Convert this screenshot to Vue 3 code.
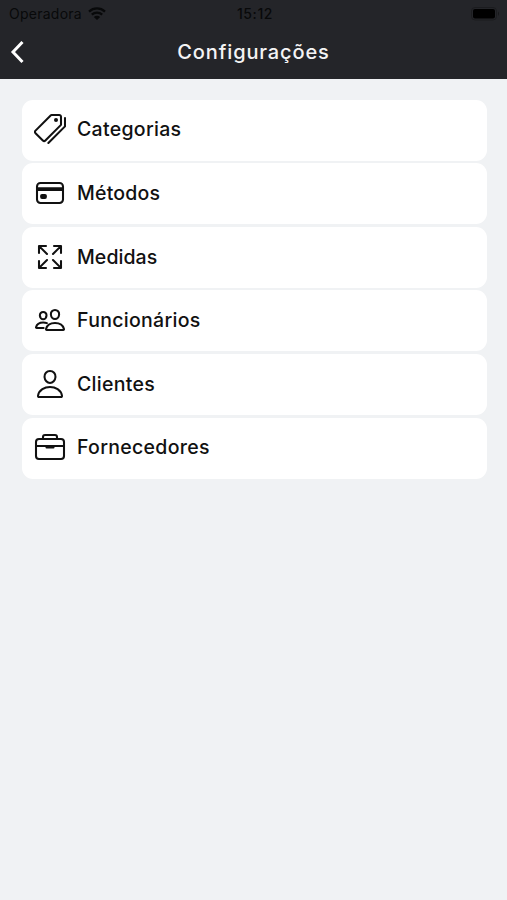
<script setup>
const items = [
  { id: 'categorias', label: 'Categorias' },
  { id: 'metodos', label: 'Métodos' },
  { id: 'medidas', label: 'Medidas' },
  { id: 'funcionarios', label: 'Funcionários' },
  { id: 'clientes', label: 'Clientes' },
  { id: 'fornecedores', label: 'Fornecedores' },
]
</script>

<template>
  <div class="screen">
    <header class="header">
      <div class="status">
        <div class="carrier">
          <span class="operator">Operadora</span>
          <svg class="wifi" viewBox="0 0 18 13">
            <path d="M1 4.6C5.6.4 12.4.4 17 4.6M3.8 7.6c3-2.7 7.4-2.7 10.4 0" fill="none" stroke="currentColor" stroke-width="2.3" />
            <path d="M9 13 5.8 9.9c1.8-1.5 4.6-1.5 6.4 0z" fill="currentColor" />
          </svg>
        </div>
        <span class="clock">15:12</span>
        <div class="power">
          <svg class="battery" viewBox="0 0 30 14">
            <rect x=".5" y=".5" width="25" height="12.5" rx="3.5" fill="none" stroke="#1b1c1f" />
            <rect x="2" y="2" width="22" height="9.5" rx="2" fill="#000" />
            <path d="M27 4.5q2 2.2 0 4.4z" fill="#17181a" />
          </svg>
        </div>
      </div>
      <div class="nav">
        <svg class="back" viewBox="0 0 14 24">
          <path d="M12.500 2 3 12l9.500 10" fill="none" stroke="#fff" stroke-width="3" />
        </svg>
        <h1 class="title">Configurações</h1>
      </div>
    </header>
    <main class="list">
      <div v-for="item in items" :key="item.id" class="row">
        <svg class="icon" viewBox="0 0 512 512">
          <g v-if="item.id === 'categorias'">
            <path d="M403.290 32H280.360a14.460 14.460 0 0 0-10.200 4.200L24.400 281.900a28.850 28.850 0 0 0 0 40.700l117 117a28.860 28.860 0 0 0 40.710 0L427.800 194a14.460 14.460 0 0 0 4.200-10.200v-123A28.660 28.660 0 0 0 403.290 32z" />
            <circle class="solid" cx="352" cy="112" r="32" />
            <path d="M230 480l262-262a13.810 13.810 0 0 0 4-10V80" />
          </g>
          <g v-else-if="item.id === 'metodos'">
            <rect x="48" y="96" width="416" height="320" rx="56" />
            <path class="thick" d="M48 192h416M128 300h48v20h-48z" />
          </g>
          <g v-else-if="item.id === 'medidas'">
            <path d="M432 320v112H320M421.800 421.800L304 304M80 192V80h112M90.200 90.200L208 208M320 80h112v112M421.800 90.200L304 208M192 432H80V320M90.200 421.800L208 304" />
          </g>
          <g v-else-if="item.id === 'funcionarios'">
            <path d="M402 168c-2.930 40.670-33.100 72-66 72s-63.120-31.320-66-72c-3-42.310 26.370-72 66-72s69 30.460 66 72z" />
            <path d="M336 304c-65.170 0-127.840 32.370-143.540 95.410-2.080 8.340 3.150 16.590 11.720 16.590h263.650c8.570 0 13.770-8.250 11.720-16.590C463.850 335.360 401.180 304 336 304z" />
            <path d="M200 185.940c-2.340 32.480-26.720 58.060-53 58.060s-50.700-25.570-53-58.060C91.610 152.150 115.340 128 147 128s55.390 24.770 53 57.940zM206 306c-18.050-8.270-37.930-11.450-59-11.450-52 0-102.100 25.850-114.650 76.200-1.650 6.660 2.530 13.250 9.370 13.250H154" />
          </g>
          <g v-else-if="item.id === 'clientes'">
            <path d="M344 144c-3.920 52.870-44 96-88 96s-84.150-43.120-88-96c-4-55 35-96 88-96s92 42 88 96z" />
            <path d="M256 304c-87 0-175.300 48-191.640 138.600C62.390 453.520 68.570 464 80 464h352c11.440 0 17.620-10.480 15.650-21.400C431.300 352 343 304 256 304z" />
          </g>
          <g v-else>
            <rect x="32" y="128" width="448" height="320" rx="48" />
            <path d="M144 128V96a32 32 0 0 1 32-32h160a32 32 0 0 1 32 32v32M480 240H32" />
            <path class="solid" d="M328 240v24a16 16 0 0 1-16 16H200a16 16 0 0 1-16-16v-24z" />
          </g>
        </svg>
        <span class="label" :class="item.id">{{ item.label }}</span>
      </div>
    </main>
  </div>
</template>

<style>
body {
  background: #f0f2f4;
}
</style>

<style scoped>
.screen {
  min-height: 900px;
  background: #f0f2f4;
  font-family: Inter, "Liberation Sans", sans-serif;
}
.header {
  box-sizing: border-box;
  height: 79px;
  background: #242529;
}
.status {
  display: grid;
  grid-template-columns: 1fr auto 1fr;
  align-items: center;
  height: 27px;
  padding: 0 6px 0 9px;
  color: #08090a;
}
.carrier {
  display: flex;
  align-items: center;
  gap: 6px;
}
.operator {
  font-size: 14px;
  line-height: 27px;
  letter-spacing: 0.250px;
}
.wifi {
  width: 18px;
  height: 13px;
}
.clock {
  font-size: 14px;
  font-weight: 500;
  line-height: 27px;
  letter-spacing: 0.600px;
}
.power {
  display: flex;
  justify-content: flex-end;
}
.battery {
  width: 30px;
  height: 14px;
}
.nav {
  display: grid;
  grid-template-columns: 14px 1fr 14px;
  align-items: center;
  height: 50px;
  padding: 0 10px;
}
.back {
  width: 14px;
  height: 24px;
}
.title {
  margin: 0;
  color: #f4f4f5;
  font-size: 20px;
  font-weight: 500;
  line-height: 50px;
  letter-spacing: 0.870px;
  text-align: center;
}
.list {
  display: flex;
  flex-direction: column;
  gap: 2.600px;
  padding: 20.700px 20.500px 0 22px;
}
.row {
  display: flex;
  align-items: center;
  gap: 11.500px;
  box-sizing: border-box;
  height: 61px;
  padding: 0 11.500px 1.400px;
  border-radius: 11px;
  background: #fff;
}
.icon {
  flex: none;
  width: 32px;
  height: 32px;
  fill: none;
  stroke: #111;
  stroke-width: 33;
  stroke-linecap: round;
  stroke-linejoin: round;
}
.solid {
  fill: #111;
  stroke: none;
}
.thick {
  stroke-width: 60;
  stroke-linecap: butt;
}
.label {
  color: #111;
  font-size: 19.500px;
  font-weight: 500;
  line-height: 28px;
  letter-spacing: 0.300px;
}
.label.metodos {
  letter-spacing: 0.200px;
}
.label.medidas {
  letter-spacing: 0.070px;
}
</style>
